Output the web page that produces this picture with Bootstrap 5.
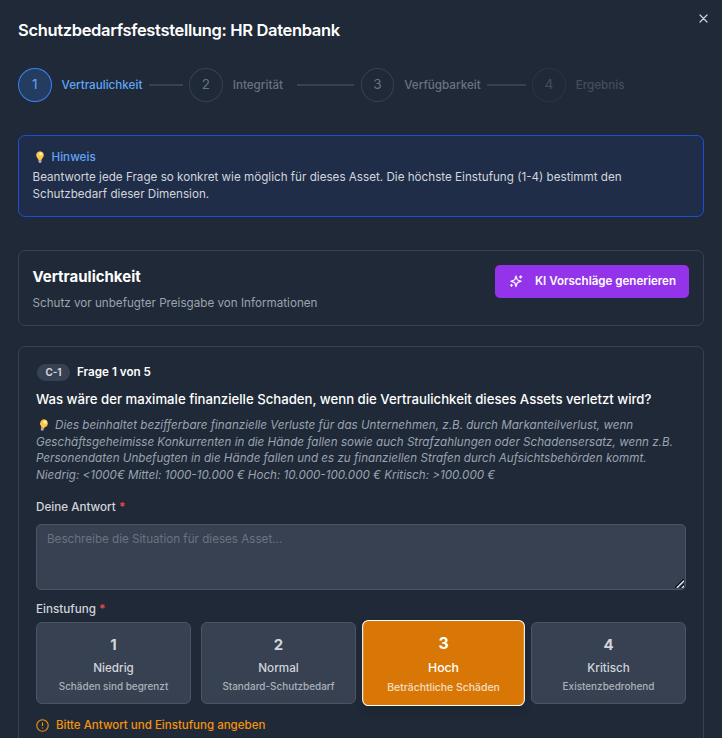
<!DOCTYPE html>
<html lang="de" data-bs-theme="dark">
<head>
<meta charset="utf-8">
<meta name="viewport" content="width=device-width, initial-scale=1">
<title>Schutzbedarfsfeststellung</title>
<link href="https://cdn.jsdelivr.net/npm/bootstrap@5.3.0/dist/css/bootstrap.min.css" rel="stylesheet">
<style>
  html, body { height: 100%; overflow: hidden; }
  body { background: #1f2937; color: #d1d5db; font: 400 11.66px/16.6px Inter, "Liberation Sans", sans-serif; }
  .dialog-page { padding: 20px 18px 0; height: 738px; overflow: hidden; }
  .dialog-title { font-size: 16.5px; line-height: 20px; font-weight: 600; letter-spacing: -.33px; color: #fff; }
  .close-x { top: 14px; right: 14px; width: 9px; height: 9px; line-height: 0; color: #d1d5db; }
  .stepper { margin-top: 27.5px; display: grid; grid-template-columns: repeat(4, 1fr); }
  .step-item { height: 34px; color: #6b7280; font-weight: 500; }
  .step-dot { width: 33.5px; height: 34px; flex: none; border: 1px solid #374151; font-size: 13.6px; font-weight: 400; }
  .step-item + .step-item { margin-left: -.3px; }
  .step-name { margin-left: 10px; padding-top: 1.5px; }
  .step-rule { height: 2px; background: #374151; flex: 1 1 0; max-width: 57px; min-width: 0; margin: 1px 6.7px 0 auto; }
  .step-gap { flex: 0 0 6.5px; }
  .step-item.is-active { color: #60a5fa; }
  .step-item.is-active .step-dot { background: #253c61; border-color: #3b82f6; }
  .step-item.is-off { opacity: .5; }
  .hint-box { margin-top: 33px; height: 82px; border: 1px solid #1d4ed8; border-radius: 7px; background: #202d48; padding: 13px 13.5px; }
  .hint-head { color: #60a5fa; font-weight: 500; margin-bottom: 4px; }
  .panel { border: 1px solid #374151; border-radius: 7px; }
  .dim-panel { margin-top: 33px; height: 76px; padding: 14px 14px 0 13.5px; }
  .dim-title { font-size: 15px; line-height: 23px; font-weight: 650; color: #fff; }
  .dim-sub { margin-top: 7px; color: #9ca3af; }
  .btn-ai { height: 33px; width: 194px; background: #9333ea; color: #fff; border-radius: 5px; font-size: 11.55px; font-weight: 600; padding: 0 13px 0 14px; }
  .btn-ai span { padding-top: 1.5px; }
  .question { margin-top: 20px; padding: 17px 17px 0; height: 430px; }
  .code-tag { background: #374151; color: #d1d5db; font-size: 9.9px; line-height: 17px; font-weight: 700; width: 33px; margin-left: 1px; }
  .q-count { color: #fff; font-weight: 600; margin-left: 7px; }
  .q-text { margin-top: 8.5px; font-size: 13.18px; line-height: 20px; font-weight: 500; color: #fff; }
  .q-help { margin-top: 8px; font-size: 11.63px; font-style: italic; color: #9ca3af; }
  .q-help svg { margin-right: 4px; }
  .field-name { font-weight: 500; color: #d1d5db; line-height: 16px; }
  .field-name span { color: #ef4444; font-weight: 700; }
  .answer-label { margin: 15.5px 0 9px; }
  .level-label { margin-top: 11px; }
  .answer.form-control { height: 66px; min-height: 0; background: #374151; border: 1px solid #4b5563; border-radius: 5px; padding: 6px 10px; font-size: 11.65px; line-height: 16.5px; resize: none; }
  .answer.form-control::placeholder { color: #6b7280; opacity: 1; }
  .grip { right: 2px; bottom: 2px; line-height: 0; }
  .levels { margin-top: 5px; display: grid; grid-template-columns: repeat(4, 1fr); gap: 10px; }
  .level { height: 82px; border: 1px solid #4b5563; border-radius: 6px; background: #374151; color: #d1d5db; padding-top: 10px; text-align: center; font-weight: 500; }
  .level-num { font-size: 15px; line-height: 23px; font-weight: 700; }
  .level-name { line-height: 17px; margin-top: 4px; }
  .level-desc { font-size: 9.95px; line-height: 14px; margin-top: 2px; opacity: .75; }
  .level.is-picked { background: #d97706; border-color: #fff; color: #fff; transform: scale(1.05); box-shadow: 0 7px 10px -3px #0002; }
  .warn { margin-top: 13px; font-size: 11.52px; color: #f5930b; font-weight: 500; }
  .warn span { margin-left: 7px; }
</style>
</head>
<body>
<main class="dialog-page position-relative">
  <div class="close-x position-absolute"><svg width="9" height="9" viewBox="0 0 9 9" stroke="currentColor" stroke-width="1.2" stroke-linecap="round"><path d="M1 1l7 7M8 1l-7 7"/></svg></div>
  <h1 class="dialog-title mb-0">Schutzbedarfsfeststellung: HR Datenbank</h1>

  <div class="stepper">
    <div class="step-item is-active d-flex align-items-center"><span class="step-dot rounded-circle d-flex align-items-center justify-content-center">1</span><span class="step-name">Vertraulichkeit</span><span class="step-gap"></span><span class="step-rule"></span></div>
    <div class="step-item d-flex align-items-center"><span class="step-dot rounded-circle d-flex align-items-center justify-content-center">2</span><span class="step-name">Integrität</span><span class="step-gap"></span><span class="step-rule"></span></div>
    <div class="step-item d-flex align-items-center"><span class="step-dot rounded-circle d-flex align-items-center justify-content-center">3</span><span class="step-name">Verfügbarkeit</span><span class="step-gap"></span><span class="step-rule"></span></div>
    <div class="step-item is-off d-flex align-items-center"><span class="step-dot rounded-circle d-flex align-items-center justify-content-center">4</span><span class="step-name">Ergebnis</span></div>
  </div>

  <section class="hint-box">
    <div class="hint-head d-flex align-items-center"><svg class="me-1" width="15" height="14" viewBox="0.5 0 15 14"><path d="M7.5 1.3a4 4 0 0 0-2.3 7.2c.5.5.7 1 .8 1.6h3c.1-.6.3-1.1.8-1.6a4 4 0 0 0-2.3-7.2z" fill="#fcc84a"/><circle cx="8.3" cy="3.8" r="1.6" fill="#fff3a8"/><path d="M6 10.1h3v1.8l-.8 1H6.8l-.8-1z" fill="#b9a3b5"/></svg><span>Hinweis</span></div>
    <div>Beantworte jede Frage so konkret wie möglich für dieses Asset. Die höchste Einstufung (1-4) bestimmt den<br>Schutzbedarf dieser Dimension.</div>
  </section>

  <section class="panel dim-panel d-flex justify-content-between align-items-start">
    <div><h2 class="dim-title mb-0">Vertraulichkeit</h2><div class="dim-sub">Schutz vor unbefugter Preisgabe von Informationen</div></div>
    <button class="btn btn-ai border-0 d-flex align-items-center justify-content-between" type="button"><svg width="14" height="14" viewBox="0 0 24 24" fill="none" stroke="currentColor" stroke-width="2" stroke-linejoin="round" stroke-linecap="round"><path d="M12 3.5 10.2 9a2.5 2.5 0 0 1-1.4 1.4L3.2 12.4l5.6 2a2.5 2.5 0 0 1 1.4 1.4l1.8 5.7 1.8-5.7a2.5 2.5 0 0 1 1.4-1.4l5.6-2-5.6-2A2.5 2.5 0 0 1 13.8 9z"/><path d="M20 3v4M18 5h4M4.3 17.6v3.4M2.6 19.3H6"/></svg><span>KI Vorschläge generieren</span></button>
  </section>

  <section class="panel question">
    <div class="d-flex align-items-center"><span class="code-tag rounded-pill text-center">C-1</span><span class="q-count">Frage 1 von 5</span></div>
    <div class="q-text text-nowrap">Was wäre der maximale finanzielle Schaden, wenn die Vertraulichkeit dieses Assets verletzt wird?</div>
    <div class="q-help text-nowrap"><svg class="align-text-bottom" width="15" height="14" viewBox="0 0 15 14"><g transform="rotate(16 7.5 7)"><path d="M7.5 1.3a4 4 0 0 0-2.3 7.2c.5.5.7 1 .8 1.6h3c.1-.6.3-1.1.8-1.6a4 4 0 0 0-2.3-7.2z" fill="#fcc84a"/><circle cx="8.3" cy="3.8" r="1.6" fill="#fff3a8"/><path d="M6 10.1h3v1.8l-.8 1H6.8l-.8-1z" fill="#b9a3b5"/></g></svg>Dies beinhaltet bezifferbare finanzielle Verluste für das Unternehmen, z.B. durch Markanteilverlust, wenn<br>Geschäftsgeheimisse Konkurrenten in die Hände fallen sowie auch Strafzahlungen oder Schadensersatz, wenn z.B.<br>Personendaten Unbefugten in die Hände fallen und es zu finanziellen Strafen durch Aufsichtsbehörden kommt.<br>Niedrig: &lt;1000€ Mittel: 1000-10.000 € Hoch: 10.000-100.000 € Kritisch: &gt;100.000 €</div>
    <label class="field-name answer-label d-block" for="answer">Deine Antwort <span>*</span></label>
    <div class="position-relative">
      <textarea class="form-control answer" id="answer" placeholder="Beschreibe die Situation für dieses Asset..."></textarea>
      <svg class="grip position-absolute" width="9" height="9" viewBox="0 0 9 9" stroke-width="1.3"><path d="M0 9 9 0M5 9l4-4" stroke="#0b0f17"/><path d="M1.8 9 9 1.8M7 9l2-2" stroke="#e5e7eb"/></svg>
    </div>
    <div class="field-name level-label">Einstufung <span>*</span></div>
    <div class="levels">
      <div class="level"><div class="level-num">1</div><div class="level-name">Niedrig</div><div class="level-desc">Schäden sind begrenzt</div></div>
      <div class="level"><div class="level-num">2</div><div class="level-name">Normal</div><div class="level-desc">Standard-Schutzbedarf</div></div>
      <div class="level is-picked"><div class="level-num">3</div><div class="level-name">Hoch</div><div class="level-desc">Beträchtliche Schäden</div></div>
      <div class="level"><div class="level-num">4</div><div class="level-name">Kritisch</div><div class="level-desc">Existenzbedrohend</div></div>
    </div>
    <div class="warn d-flex align-items-center"><svg width="13" height="13" viewBox="0 0 13 13" fill="none" stroke="currentColor" stroke-width="1.1"><circle cx="6.5" cy="6.5" r="5.7"/><path d="M6.5 3.5v3.6M6.5 8.4v1.2"/></svg><span>Bitte Antwort und Einstufung angeben</span></div>
  </section>
</main>
<script src="https://cdn.jsdelivr.net/npm/bootstrap@5.3.0/dist/js/bootstrap.bundle.min.js"></script>
</body>
</html>
